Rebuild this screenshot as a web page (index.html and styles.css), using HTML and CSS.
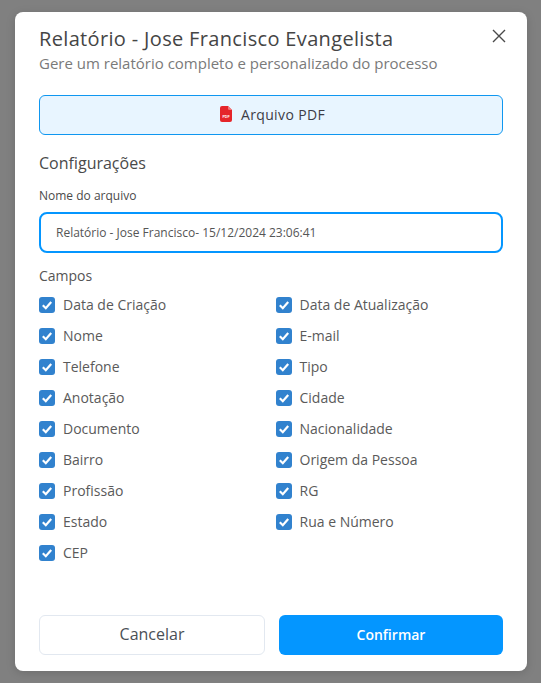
FILE: index.html
```html
<!DOCTYPE html>
<html lang="pt-BR">
<head>
<meta charset="utf-8">
<title>Relatório</title>
<link rel="stylesheet" href="styles.css">
</head>
<body>
<div class="modal">
  <button class="close" aria-label="Fechar"><svg width="14" height="14" viewBox="0 0 14 14"><path d="M1 1L13 13M13 1L1 13" stroke="#4a4a4a" stroke-width="1.4" fill="none"/></svg></button>
  <h1 class="title">Relatório - Jose Francisco Evangelista</h1>
  <p class="subtitle">Gere um relatório completo e personalizado do processo</p>
  <div class="format">
    <svg class="pdf" width="12" height="16" viewBox="0 0 12 16"><path d="M2 0H8L12 4V14A2 2 0 0 1 10 16H2A2 2 0 0 1 0 14V2A2 2 0 0 1 2 0Z" fill="#e5252a"/><path d="M8 0L12 4H9.500A1.500 1.500 0 0 1 8 2.500Z" fill="#f27a7d"/><text class="pdf-text" x="6" y="12.400" text-anchor="middle">PDF</text></svg>
    <span>Arquivo PDF</span>
  </div>
  <h2 class="section">Configurações</h2>
  <label class="label">Nome do arquivo</label>
  <div class="input">Relatório - Jose Francisco- 15/12/2024 23:06:41</div>
  <div class="fields-title">Campos</div>
  <div class="fields">
    <div class="field"><span class="box"><svg width="16" height="16" viewBox="0 0 16 16"><path d="M3.800 8.300L6.800 11.200L12.200 5" stroke="#fff" stroke-width="2.200" fill="none"/></svg></span>Data de Criação</div>
    <div class="field"><span class="box"><svg width="16" height="16" viewBox="0 0 16 16"><path d="M3.800 8.300L6.800 11.200L12.200 5" stroke="#fff" stroke-width="2.200" fill="none"/></svg></span>Data de Atualização</div>
    <div class="field"><span class="box"><svg width="16" height="16" viewBox="0 0 16 16"><path d="M3.800 8.300L6.800 11.200L12.200 5" stroke="#fff" stroke-width="2.200" fill="none"/></svg></span>Nome</div>
    <div class="field"><span class="box"><svg width="16" height="16" viewBox="0 0 16 16"><path d="M3.800 8.300L6.800 11.200L12.200 5" stroke="#fff" stroke-width="2.200" fill="none"/></svg></span>E-mail</div>
    <div class="field"><span class="box"><svg width="16" height="16" viewBox="0 0 16 16"><path d="M3.800 8.300L6.800 11.200L12.200 5" stroke="#fff" stroke-width="2.200" fill="none"/></svg></span>Telefone</div>
    <div class="field"><span class="box"><svg width="16" height="16" viewBox="0 0 16 16"><path d="M3.800 8.300L6.800 11.200L12.200 5" stroke="#fff" stroke-width="2.200" fill="none"/></svg></span>Tipo</div>
    <div class="field"><span class="box"><svg width="16" height="16" viewBox="0 0 16 16"><path d="M3.800 8.300L6.800 11.200L12.200 5" stroke="#fff" stroke-width="2.200" fill="none"/></svg></span>Anotação</div>
    <div class="field"><span class="box"><svg width="16" height="16" viewBox="0 0 16 16"><path d="M3.800 8.300L6.800 11.200L12.200 5" stroke="#fff" stroke-width="2.200" fill="none"/></svg></span>Cidade</div>
    <div class="field"><span class="box"><svg width="16" height="16" viewBox="0 0 16 16"><path d="M3.800 8.300L6.800 11.200L12.200 5" stroke="#fff" stroke-width="2.200" fill="none"/></svg></span>Documento</div>
    <div class="field"><span class="box"><svg width="16" height="16" viewBox="0 0 16 16"><path d="M3.800 8.300L6.800 11.200L12.200 5" stroke="#fff" stroke-width="2.200" fill="none"/></svg></span>Nacionalidade</div>
    <div class="field"><span class="box"><svg width="16" height="16" viewBox="0 0 16 16"><path d="M3.800 8.300L6.800 11.200L12.200 5" stroke="#fff" stroke-width="2.200" fill="none"/></svg></span>Bairro</div>
    <div class="field"><span class="box"><svg width="16" height="16" viewBox="0 0 16 16"><path d="M3.800 8.300L6.800 11.200L12.200 5" stroke="#fff" stroke-width="2.200" fill="none"/></svg></span>Origem da Pessoa</div>
    <div class="field"><span class="box"><svg width="16" height="16" viewBox="0 0 16 16"><path d="M3.800 8.300L6.800 11.200L12.200 5" stroke="#fff" stroke-width="2.200" fill="none"/></svg></span>Profissão</div>
    <div class="field"><span class="box"><svg width="16" height="16" viewBox="0 0 16 16"><path d="M3.800 8.300L6.800 11.200L12.200 5" stroke="#fff" stroke-width="2.200" fill="none"/></svg></span>RG</div>
    <div class="field"><span class="box"><svg width="16" height="16" viewBox="0 0 16 16"><path d="M3.800 8.300L6.800 11.200L12.200 5" stroke="#fff" stroke-width="2.200" fill="none"/></svg></span>Estado</div>
    <div class="field"><span class="box"><svg width="16" height="16" viewBox="0 0 16 16"><path d="M3.800 8.300L6.800 11.200L12.200 5" stroke="#fff" stroke-width="2.200" fill="none"/></svg></span>Rua e Número</div>
    <div class="field"><span class="box"><svg width="16" height="16" viewBox="0 0 16 16"><path d="M3.800 8.300L6.800 11.200L12.200 5" stroke="#fff" stroke-width="2.200" fill="none"/></svg></span>CEP</div>
  </div>
  <div class="footer">
    <button class="btn cancel">Cancelar</button>
    <button class="btn confirm">Confirmar</button>
  </div>
</div>
</body>
</html>
```
FILE: styles.css
```css
* { box-sizing: border-box; }
html, body { height: 100%; }
body {
  margin: 0;
  background: #808080;
  font-family: "Open Sans", sans-serif;
  color: #4a4a4a;
  padding: 12px 14px 12px 15px;
  overflow: hidden;
}
.modal {
  position: relative;
  width: 512px;
  height: 659px;
  background: #fff;
  border-radius: 8px;
  padding: 15px 24px 16px;
  display: flex;
  flex-direction: column;
  box-shadow: 0 2px 10px rgba(0,0,0,.15);
}
.close {
  position: absolute;
  top: 17px;
  right: 21px;
  padding: 0;
  border: 0;
  background: none;
  width: 14px;
  height: 14px;
  display: flex;
}
.title {
  margin: 0;
  font-size: 20px;
  line-height: 24px;
  font-weight: 500;
  letter-spacing: 0.34px;
  color: #454545;
}
.subtitle {
  margin: 0;
  font-size: 15px;
  line-height: 24px;
  color: #7a7a7a;
}
.format {
  margin-top: 20px;
  padding: 0 0 2px 3px;
  height: 40px;
  flex: none;
  border: 1px solid #0f97f0;
  border-radius: 6px;
  background: #e8f5ff;
  display: flex;
  align-items: center;
  justify-content: center;
  gap: 9px;
  font-size: 14px;
  font-weight: 500;
  letter-spacing: 0.37px;
  color: #3c3c46;
}
.pdf { display: block; }
.pdf-text {
  font-family: "Liberation Sans", sans-serif;
  font-size: 3.600px;
  font-weight: 700;
  letter-spacing: 0;
  fill: #fff;
}
.section {
  margin: 17px 0 0;
  font-size: 16px;
  line-height: 22px;
  font-weight: 400;
  color: #4a4a4a;
}
.label {
  margin-top: 14px;
  font-size: 12px;
  line-height: 16px;
  color: #4a4a4a;
}
.input {
  margin-top: 8px;
  height: 41px;
  flex: none;
  border: 2px solid #0496ff;
  border-radius: 8px;
  padding: 0 15px;
  display: flex;
  align-items: center;
  font-size: 12px;
  color: #555;
}
.fields-title {
  margin-top: 13px;
  font-size: 14px;
  line-height: 20px;
  color: #555;
}
.fields {
  margin-top: 3px;
  display: grid;
  grid-template-columns: 236.5px 1fr;
  grid-auto-rows: 31px;
}
.field {
  display: flex;
  align-items: center;
  gap: 8px;
  font-size: 14px;
  color: #5a5a5a;
}
.box {
  width: 16px;
  height: 16px;
  border-radius: 3px;
  background: #3182ce;
  display: block;
  flex: none;
}
.box svg { display: block; }
.footer {
  margin-top: auto;
  display: flex;
  gap: 14px;
}
.btn {
  height: 40px;
  border-radius: 6px;
  font-family: inherit;
  padding: 0 0 2px;
}
.cancel {
  width: 226px;
  background: #fff;
  border: 1px solid #e2e8f0;
  color: #4a5056;
  font-size: 16px;
}
.confirm {
  width: 224px;
  background: #0496ff;
  border: 0;
  color: #fff;
  font-size: 14px;
  font-weight: 600;
}
```
